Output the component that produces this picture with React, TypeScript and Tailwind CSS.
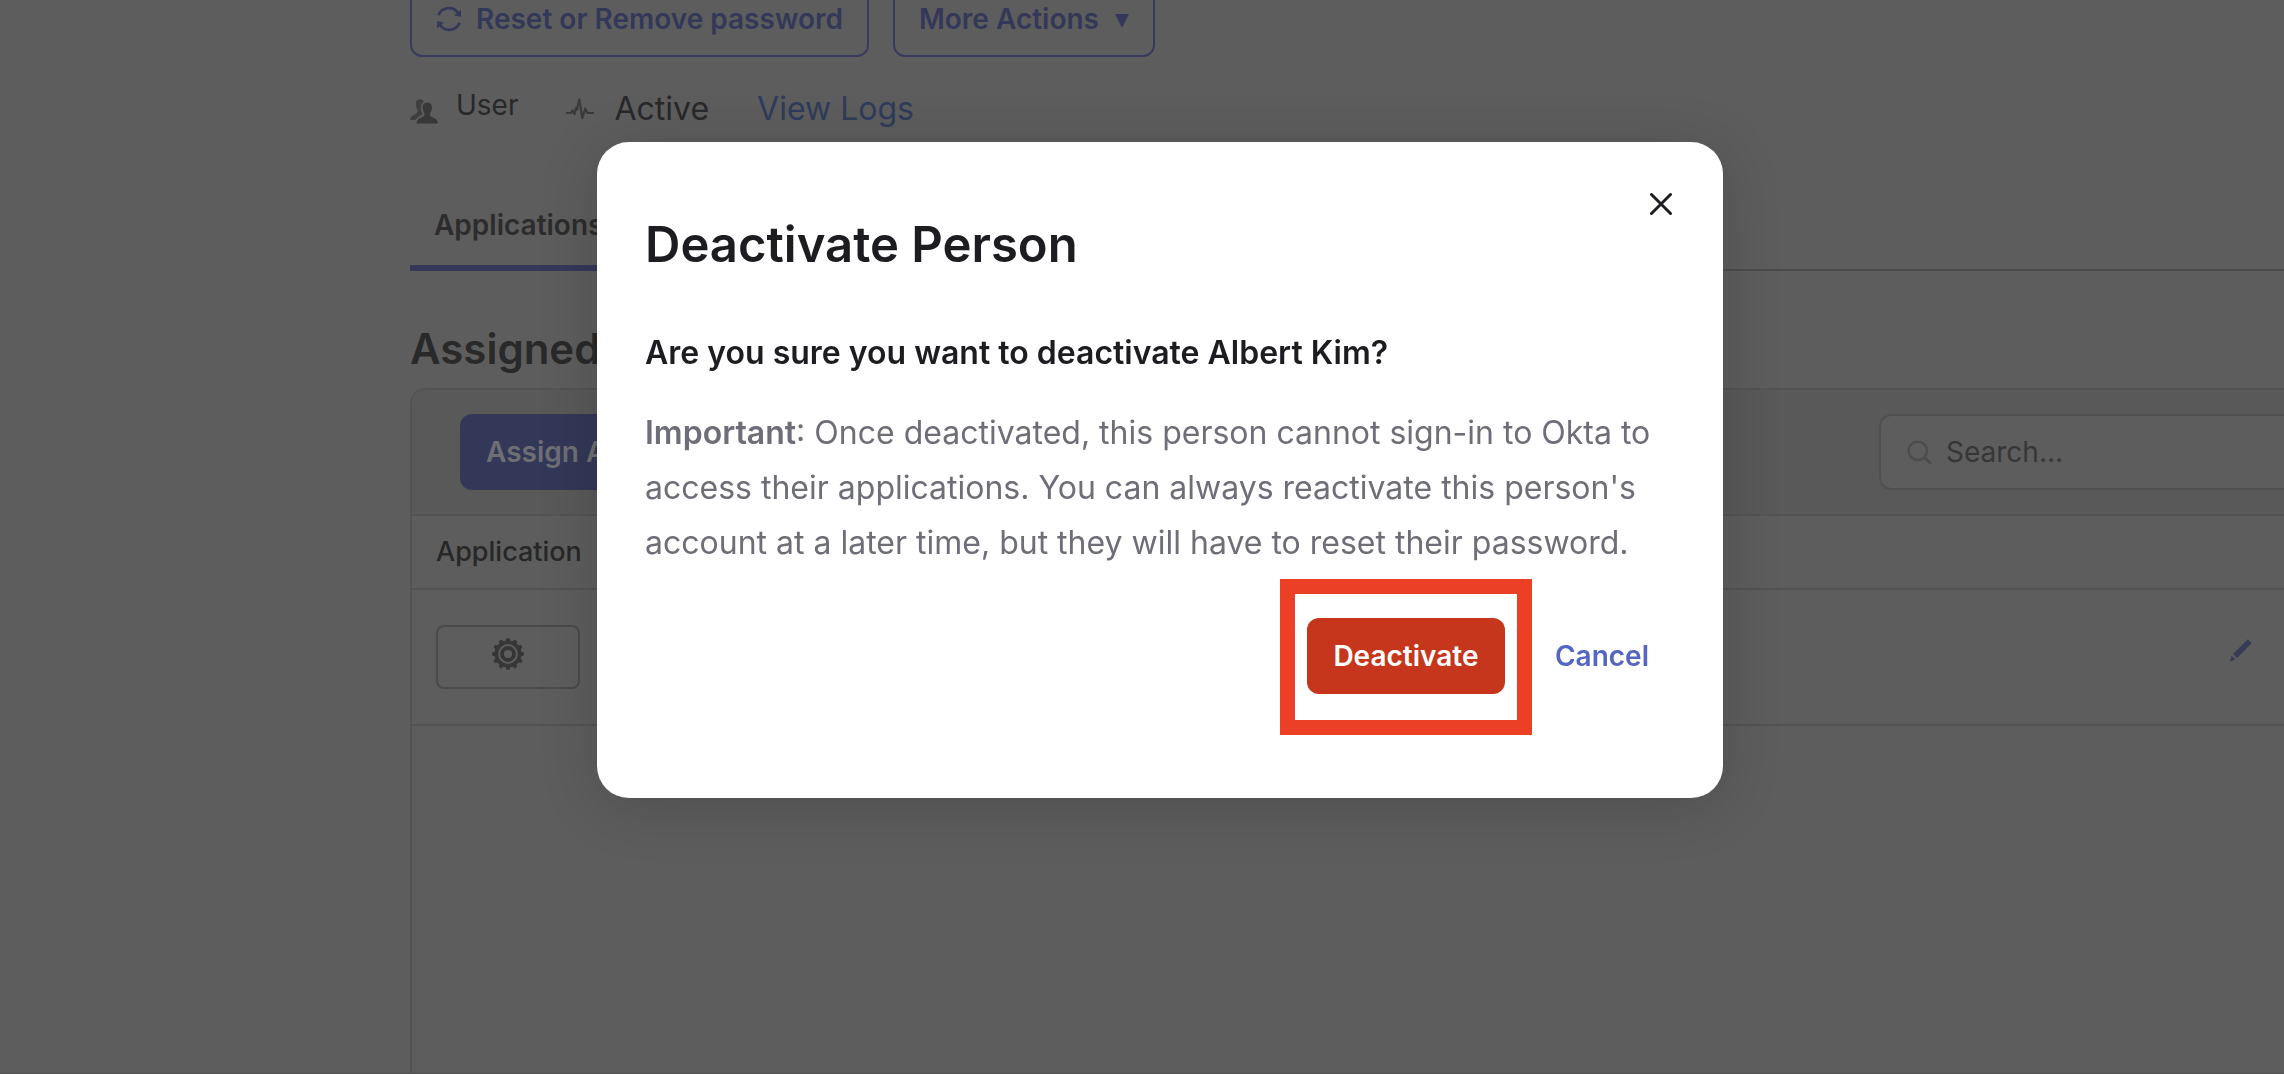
import React from "react";

function RefreshIcon() {
  return (
    <svg className="size-[26px] shrink-0" viewBox="0 0 26 26" fill="none" stroke="currentColor" strokeWidth="2.6" aria-hidden="true">
      <path d="M2.4 9.2A11.200 11.200 0 0 1 22 7" />
      <path d="M23.600 16.800A11.200 11.200 0 0 1 4 19" />
      <path d="M25 3.600v7.200l-7-1.400z" fill="currentColor" stroke="none" />
      <path d="M1 22.400v-7.200l7 1.400z" fill="currentColor" stroke="none" />
    </svg>
  );
}

function PeopleIcon() {
  return (
    <svg className="h-[25px] w-7 text-[#383838]" viewBox="0 0 28 25" fill="currentColor" aria-hidden="true">
      <path
        d="M10 0.200c-3 0-4.200 2-4.200 4.600 0 2.600.8 4.600 1.800 5.800.2 2.400-.4 3.400-2.200 4.400C3 16.300.2 17.200 0 21h5.600c1-2.400 3-3.200 5-4.200 1.400-.7 1.800-1.600 1.600-2.800-1-1.400-1.300-3-1.300-5 0-2.800.8-5 2.900-6.600C13 .9 11.800.2 10 .2z"
        opacity=".8"
      />
      <path d="M17.300 3.400c-3 0-4.600 2-4.600 4.800 0 2.600.7 4.600 1.900 5.900.2 2-.2 3-1.900 3.800-2.700 1.200-5.900 2-6 6.500h21.200c-.1-4.500-3.300-5.300-6-6.500-1.700-.8-2.100-1.800-1.900-3.800 1.200-1.300 1.900-3.300 1.900-5.900 0-2.800-1.600-4.800-4.600-4.800z" />
    </svg>
  );
}

function PulseIcon() {
  return (
    <svg className="h-[22px] w-7 text-[#3a3a3a]" viewBox="0 0 28 22" fill="none" stroke="currentColor" strokeWidth="2.200" strokeLinejoin="round" aria-hidden="true">
      <path d="M0 15h5l1.500-2.500L8.500 16l1.500-6 1 1.500L13.300 1.500l3 18.500 3-9.500 2 4.500H28" />
    </svg>
  );
}

function GearIcon() {
  const teeth = Array.from({ length: 12 }, (_, i) => i * 30);
  return (
    <svg className="size-8" viewBox="-16 -16 32 32" aria-hidden="true">
      {teeth.map((angle) => (
        <rect key={angle} x="-2" y="-15.800" width="4" height="5" rx="1.200" fill="currentColor" transform={`rotate(${angle})`} />
      ))}
      <circle r="11.700" fill="none" stroke="currentColor" strokeWidth="3.600" />
      <circle r="6" fill="none" stroke="currentColor" strokeWidth="3.800" />
    </svg>
  );
}

function PencilIcon() {
  return (
    <svg className="size-[23px]" viewBox="0 0 23 23" fill="currentColor" aria-hidden="true">
      <path d="M18.800 0.300l3.900 3.900L8 18.900 4 15z" />
      <path d="M2.600 16.800l3.600 3.400-5.600 2.500z" />
    </svg>
  );
}

function SearchIcon() {
  return (
    <svg className="size-[25px] shrink-0 text-[#4c4c4c]" viewBox="0 0 25 25" fill="none" stroke="currentColor" strokeWidth="2.400" strokeLinecap="round" aria-hidden="true">
      <circle cx="10.800" cy="10.800" r="9.200" />
      <path d="M18 18l5 5" strokeWidth="3" />
    </svg>
  );
}

function CloseIcon() {
  return (
    <svg className="size-6" viewBox="0 0 24 24" fill="none" stroke="currentColor" strokeWidth="3" strokeLinecap="round" aria-hidden="true">
      <path d="M2.500 2.500l19 19M21.500 2.500l-19 19" />
    </svg>
  );
}

function PersonPage() {
  return (
    <main className="-mr-24 flex h-full flex-col pl-[410px]">
      <div className="-mt-5 flex gap-6">
        <button type="button" className="flex h-[77px] items-center gap-3.5 rounded-xl border-2 border-[#383b5c] px-6 text-[28px] font-semibold text-[#343858]">
          <RefreshIcon />
          Reset or Remove password
        </button>
        <button type="button" className="flex h-[77px] items-center gap-4 rounded-xl border-2 border-[#383b5c] px-6 text-[28px] font-semibold text-[#343858]">
          More Actions
          <svg className="mt-1 size-3.5" viewBox="0 0 14 14" fill="currentColor" aria-hidden="true">
            <path d="M0 0h14L7 14z" />
          </svg>
        </button>
      </div>

      <div className="mt-7 flex h-12 items-center text-[#282829]">
        <span className="pt-1">
          <PeopleIcon />
        </span>
        <span className="-mt-2 ml-[18px] text-[28px]">User</span>
        <span className="ml-12 flex items-center gap-5 text-[32px]">
          <PulseIcon />
          Active
        </span>
        <a href="#logs" className="ml-12 text-[32px] text-[#2e3b5a]">
          View Logs
        </a>
      </div>

      <nav className="mt-[63px] flex h-[75px] border-b-2 border-[#4c4c4c]">
        <a href="#applications" className="-mb-0.5 border-b-6 border-[#343959] px-6 pt-2 text-[28px] font-semibold text-[#2c2c2d]">
          Applications
        </a>
      </nav>

      <h2 className="mt-[50px] text-[42px] leading-[56px] font-semibold text-[#29292a]">Assigned Applications</h2>

      <section className="mt-[11px] flex-1 rounded-tl-2xl border-2 border-b-0 border-[#535353]">
        <div className="flex items-center justify-between rounded-tl-2xl border-b-2 border-[#535353] bg-[#595959] py-6 pr-12 pl-12">
          <button type="button" className="h-[76px] rounded-xl bg-[#333858] px-[26px] text-[28px] font-semibold text-[#6f6f73]">
            Assign Applications
          </button>
          <label className="flex h-[76px] w-[451px] items-center gap-3.5 rounded-xl border-2 border-[#505050] bg-[#5d5d5d] px-[26px]">
            <SearchIcon />
            <input type="search" placeholder="Search..." aria-label="Search" className="min-w-0 flex-1 bg-transparent text-[28px] placeholder:text-[#363637] focus:outline-none" />
          </label>
        </div>
        <table className="w-full border-separate border-spacing-0">
          <thead>
            <tr>
              <th scope="col" className="h-[74px] border-b-2 border-[#535353] px-6 text-left text-[27px] font-medium text-[#272727]">
                Application
              </th>
              <th scope="col" aria-label="Actions" className="border-b-2 border-[#535353]" />
            </tr>
          </thead>
          <tbody>
            <tr>
              <td className="h-[136px] border-b-2 border-[#535353] px-6">
                <button type="button" aria-label="Application settings" className="flex h-16 w-36 items-center justify-center rounded-lg border-2 border-[#4a4a4a] pb-1.5 text-[#363636]">
                  <GearIcon />
                </button>
              </td>
              <td className="border-b-2 border-[#535353] pr-[126px] pb-4 text-right">
                <button type="button" aria-label="Edit assignment" className="align-middle text-[#383b58]">
                  <PencilIcon />
                </button>
              </td>
            </tr>
          </tbody>
        </table>
      </section>
    </main>
  );
}

function DeactivateDialog() {
  return (
    <div className="fixed inset-0 flex items-start justify-center pt-[142px] pl-9">
      <div role="dialog" aria-modal="true" aria-labelledby="dialog-title" className="relative w-[1126px] rounded-[32px] bg-white px-12 pt-[71px] pb-[104px] shadow-[0_8px_60px_rgba(0,0,0,0.16)]">
        <button type="button" aria-label="Close" className="absolute top-[50px] right-[50px] text-[#1d1d21]">
          <CloseIcon />
        </button>
        <h1 id="dialog-title" className="text-[49px] leading-[64px] font-semibold text-[#1d1d21]">
          Deactivate Person
        </h1>
        <p className="mt-[52px] text-[32px] leading-[48px] font-semibold text-[#1d1d21]">Are you sure you want to deactivate Albert Kim?</p>
        <p className="mt-7 text-[32px] leading-[55px] text-[#6e6e78]">
          <strong className="font-semibold">Important</strong>: Once deactivated, this person cannot sign-in to Okta to access their applications. You can always reactivate this person's account at a later time, but they will have to reset their password.
        </p>
        <div className="mt-12 flex justify-end gap-6">
          <div className="relative">
            <button type="button" className="h-[76px] w-[198px] rounded-xl bg-[#c5361d] text-[28px] font-semibold text-white">
              Deactivate
            </button>
            <div className="pointer-events-none absolute -top-[39px] -right-[27px] -bottom-[41px] -left-[27px] border-[15px] border-[#eb4026]" />
          </div>
          <button type="button" className="h-[76px] rounded-xl px-[26px] text-[28px] font-semibold text-[#5465c4]">
            Cancel
          </button>
        </div>
      </div>
    </div>
  );
}

export default function App() {
  return (
    <div className="h-screen overflow-hidden border-b border-[#505050] bg-[#5d5d5d] font-[Inter,sans-serif]">
      <PersonPage />
      <DeactivateDialog />
    </div>
  );
}
